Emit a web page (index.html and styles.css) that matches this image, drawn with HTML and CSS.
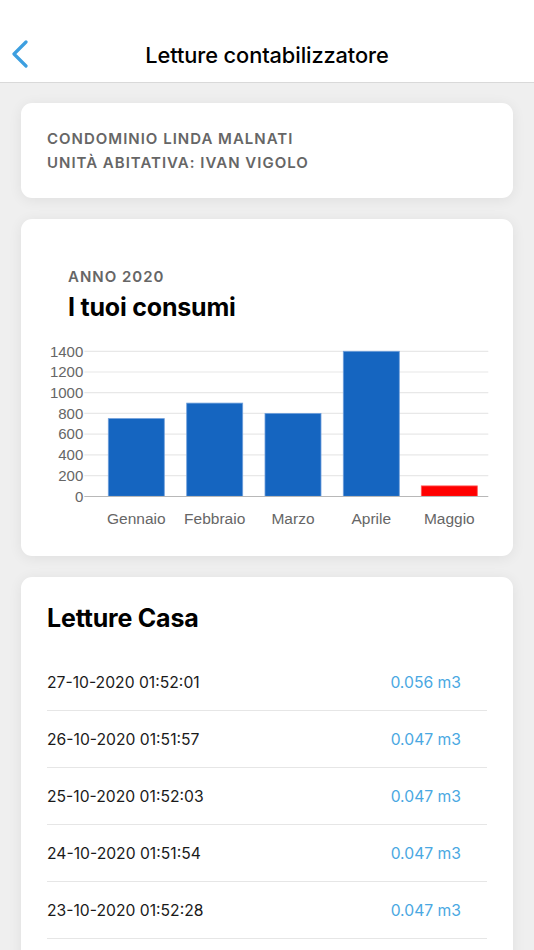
FILE: index.html
```html
<!DOCTYPE html>
<html lang="it">
<head>
<meta charset="utf-8">
<title>Letture contabilizzatore</title>
<link rel="stylesheet" href="styles.css">
</head>
<body>
<header class="topbar">
  <button class="back" aria-label="Indietro">
    <svg width="18" height="28" viewBox="0 0 18 28"><path d="M15 2 L3 14 L15 26" fill="none" stroke="#3d9fe0" stroke-width="3.2" stroke-linecap="round" stroke-linejoin="round"/></svg>
  </button>
  <h1 class="title">Letture contabilizzatore</h1>
</header>
<main class="content">
  <section class="card info">
    <p class="caps">CONDOMINIO LINDA MALNATI</p>
    <p class="caps">UNITÀ ABITATIVA: IVAN VIGOLO</p>
  </section>

  <section class="card chart-card">
    <div class="chart-head">
      <p class="caps">ANNO 2020</p>
      <h2 class="card-title">I tuoi consumi</h2>
    </div>
    <svg class="chart" width="492" height="225" viewBox="0 0 492 225">
      <g class="grid">
        <line x1="63.3" x2="467.3" y1="30.3" y2="30.3"/>
        <line x1="63.3" x2="467.3" y1="51" y2="51"/>
        <line x1="63.3" x2="467.3" y1="71.7" y2="71.7"/>
        <line x1="63.3" x2="467.3" y1="92.4" y2="92.4"/>
        <line x1="63.3" x2="467.3" y1="113.2" y2="113.2"/>
        <line x1="63.3" x2="467.3" y1="133.9" y2="133.9"/>
        <line x1="63.3" x2="467.3" y1="154.6" y2="154.6"/>
      </g>
      <g class="ticks">
        <text x="62.3" y="35.5">1400</text>
        <text x="62.3" y="56.2">1200</text>
        <text x="62.3" y="76.9">1000</text>
        <text x="62.3" y="97.6">800</text>
        <text x="62.3" y="118.4">600</text>
        <text x="62.3" y="139.1">400</text>
        <text x="62.3" y="159.8">200</text>
        <text x="62.3" y="180.5">0</text>
      </g>
      <g class="bars">
        <rect x="87.3" y="97.6" width="56" height="77.7"/>
        <rect x="165.7" y="82.1" width="56" height="93.2"/>
        <rect x="244" y="92.4" width="56" height="82.9"/>
        <rect x="322.3" y="30.3" width="56" height="145"/>
        <rect class="current" x="400.3" y="164.9" width="56" height="10.4"/>
      </g>
      <line class="axis" x1="63.3" x2="467.3" y1="175.5" y2="175.5"/>
      <g class="months">
        <text x="115.3" y="203">Gennaio</text>
        <text x="193.7" y="203">Febbraio</text>
        <text x="272" y="203">Marzo</text>
        <text x="350.3" y="203">Aprile</text>
        <text x="428.3" y="203">Maggio</text>
      </g>
    </svg>
  </section>

  <section class="card readings">
    <h2 class="card-title">Letture Casa</h2>
    <ul class="rows">
      <li class="row"><span class="date">27-10-2020 01:52:01</span><span class="value">0.056 m3</span></li>
      <li class="row"><span class="date">26-10-2020 01:51:57</span><span class="value">0.047 m3</span></li>
      <li class="row"><span class="date">25-10-2020 01:52:03</span><span class="value">0.047 m3</span></li>
      <li class="row"><span class="date">24-10-2020 01:51:54</span><span class="value">0.047 m3</span></li>
      <li class="row"><span class="date">23-10-2020 01:52:28</span><span class="value">0.047 m3</span></li>
    </ul>
  </section>
</main>
</body>
</html>
```

FILE: styles.css
```css
* { box-sizing: border-box; }
html, body { margin: 0; padding: 0; }
body {
  background: #efefef;
  font-family: Inter, "Noto Sans", sans-serif;
  color: #000;
  width: 534px;
  height: 950px;
  overflow: hidden;
}
.topbar {
  height: 83px;
  background: #fff;
  border-bottom: 1px solid #d9d9d9;
  padding-top: 29px;
  position: relative;
  display: flex;
  justify-content: center;
}
.back {
  position: absolute;
  left: 11px;
  top: 40px;
  background: none;
  border: 0;
  padding: 0;
  width: 20px;
  height: 28px;
}
.back svg { display: block; }
.title {
  margin: 0;
  font-size: 21.8px;
  font-weight: 500;
  line-height: 52px;
  letter-spacing: -0.1px;
}
.content {
  padding: 20px 21px 0;
  display: flex;
  flex-direction: column;
  gap: 21px;
}
.card {
  background: #fff;
  border-radius: 11px;
  box-shadow: 0 2px 14px rgba(0, 0, 0, 0.07);
}
.caps {
  margin: 0;
  font-size: 15px;
  font-weight: 600;
  color: #666;
  letter-spacing: 1px;
  line-height: 24px;
}
.info {
  height: 95px;
  padding: 24px 26px 0;
}
.chart-card {
  height: 337px;
  padding-top: 47px;
}
.chart-head { padding: 0 47px; }
.chart-head .caps { line-height: 22px; }
.card-title {
  margin: 0;
  font-size: 25px;
  font-weight: 700;
  line-height: 30px;
  letter-spacing: -0.2px;
}
.chart-head .card-title { margin-top: 4px; }
.chart { display: block; margin-top: -1px; }
.grid line { stroke: #e8e8e8; stroke-width: 1.2; }
.axis { stroke: #b8b8b8; stroke-width: 1.2; }
.ticks text {
  font-family: "Liberation Sans", Arial, sans-serif;
  font-size: 15px;
  fill: #666;
  text-anchor: end;
}
.months text {
  font-family: "Liberation Sans", Arial, sans-serif;
  font-size: 15.5px;
  fill: #666;
  text-anchor: middle;
}
.bars rect { fill: #1565c0; stroke: #6f9fdb; stroke-width: 0.8; }
.bars rect.current { fill: #ff0000; stroke: #ff5a5a; }
.readings {
  height: 400px;
  padding: 26px 26px 0;
}
.rows {
  list-style: none;
  margin: 21px 0 0;
  padding: 0;
}
.row {
  height: 57px;
  border-bottom: 1px solid #e6e6e6;
  display: flex;
  align-items: center;
  justify-content: space-between;
  padding-right: 26px;
  font-size: 15.7px;
}
.date { color: #1a1a1a; }
.value { color: #4aa8e2; }
```
